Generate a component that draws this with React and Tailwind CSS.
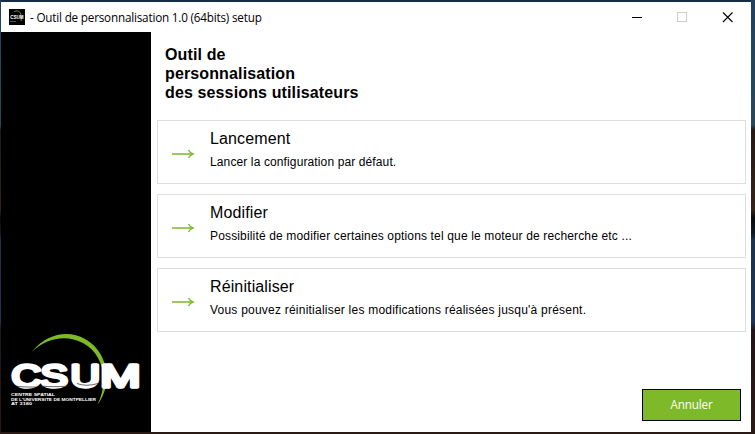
const options = [
  { title: 'Lancement', text: 'Lancer la configuration par défaut.', textCls: 'tracking-[0.12px]' },
  { title: 'Modifier', text: 'Possibilité de modifier certaines options tel que le moteur de recherche etc ...', textCls: 'tracking-[0.155px]' },
  { title: 'Réinitialiser', text: "Vous pouvez réinitialiser les modifications réalisées jusqu'à présent.", textCls: 'tracking-[0.225px]' },
];

function CsumLogo({ className }) {
  return (
    <svg className={className} viewBox="0 0 150 90" fill="none">
      <path d="M32 26.8 C47 8 69 5 85 14 C103 24 109 44 106 61 C104 69 101 75 97 80.5 C101.5 72 103.5 63 103.5 54 C103 38 96 25 83 18 C66 9 46 13 32 26.8Z" fill="#7db928" />
      <g fontFamily="'Liberation Sans', Arial, sans-serif" fill="#fff">
        <text
          transform="translate(0 62) scale(1.3 1)"
          y="0"
          fontSize="31.5"
          stroke="#fff"
          strokeWidth="3.4"
          strokeLinejoin="round"
        >
          <tspan x="8.8">C</tspan>
          <tspan x="31.2">S</tspan>
          <tspan x="54.3">U</tspan>
          <tspan x="77.2" textLength="31" lengthAdjust="spacingAndGlyphs">M</tspan>
        </text>
        <path d="M16 61.2 Q22 62.2 38 62 M43 61.2 Q52 62.2 68 61.2 M77 58.5 Q86 62 98 58.5" stroke="#000" strokeWidth="0.6" />
        <g fontSize="3.8" fontWeight="bold">
          <text x="11" y="71" textLength="44" lengthAdjust="spacingAndGlyphs">CENTRE SPATIAL</text>
          <text x="11" y="75.7" textLength="85" lengthAdjust="spacingAndGlyphs">DE L'UNIVERSITE DE MONTPELLIER</text>
          <text x="11" y="80.3" textLength="21" lengthAdjust="spacingAndGlyphs">AT 3180</text>
        </g>
      </g>
    </svg>
  );
}

function AppIcon() {
  return (
    <svg className="h-4 w-4 bg-black" viewBox="0 0 16 16" fill="none">
      <path d="M5 2.5 Q11 0 12.5 7 L12 12" stroke="#6fa525" strokeWidth="0.9" />
      <text transform="translate(1.2 10.2) scale(0.76 1)" fontSize="6" fontWeight="bold" fontFamily="'Liberation Sans', Arial, sans-serif" fill="#fff">CSUM</text>
      <path d="M1 12.5h6" stroke="#666" strokeWidth="0.8" />
    </svg>
  );
}

export default function App() {
  return (
    <div
      className="h-[434px] w-[755px] overflow-hidden bg-[linear-gradient(180deg,#24405a_0px,#2b4858_125px,#241916_130px,#32231c_210px,#080a0c_218px,#101a24_234px,#1d3349_240px,#1e3450_322px,#20151a_330px,#2a1a16_434px)] pt-0.5 pr-1 pb-0.5 pl-px"
    >
      <div className="flex h-[430px] w-[750px] flex-col bg-white shadow-[0_-2px_0_#172d45]">
        <header className="flex h-[30px] shrink-0 items-center pr-[17px] pl-2">
          <AppIcon />
          <span className="mb-px ml-[5px] font-['Open_Sans',sans-serif] text-[11.7px] leading-4 tracking-[-0.19px] whitespace-pre text-black">
            - Outil de personnalisation 1.0 (64bits) setup
          </span>
          <svg className="ml-auto h-[11px] w-[102px]" viewBox="0 0 102 11" fill="none" shapeRendering="crispEdges">
            <path d="M0 5.5h10" stroke="#000" />
            <rect x="45.5" y="0.5" width="9" height="9" stroke="#ccc" />
            <path d="M91 .5l9.5 9.5M100.5 .5l-9.5 9.5" stroke="#000" shapeRendering="auto" strokeWidth="1.1" />
          </svg>
        </header>
        <div className="flex min-h-0 flex-1">
          <aside className="flex w-[150px] shrink-0 flex-col justify-end bg-black pb-[17px]">
            <CsumLogo className="-ml-px h-[90px] w-[150px]" />
          </aside>
          <main className="flex min-w-0 flex-1 flex-col pr-[5px] pl-[6px] font-['Liberation_Sans',Arial,sans-serif] text-black">
            <h1 className="h-[88px] pt-[13px] pl-2 text-[16px] leading-[19px] font-bold tracking-[0.13px]">
              Outil de
              <br />
              personnalisation
              <br />
              des sessions utilisateurs
            </h1>
            <div className="flex flex-col gap-2.5">
              {options.map((o) => (
                <button key={o.title} className="flex h-16 w-[589px] border border-[#dedede] text-left">
                  <svg className="mt-[28px] ml-[14px] h-[10px] w-[22px]" viewBox="0 0 22 10" fill="none" stroke="#7db928">
                    <path d="M0 5H21" strokeWidth="1.5" />
                    <path d="M16.5 1Q18 4 21 5Q18 6 16.5 9" strokeWidth="1.4" />
                  </svg>
                  <span className="ml-4 flex flex-col">
                    <span className="mt-2 text-[16px] leading-[19px] tracking-[0.12px]">{o.title}</span>
                    <span className={`mt-[7px] text-[12px] leading-[15px] whitespace-nowrap ${o.textCls}`}>{o.text}</span>
                  </span>
                </button>
              ))}
            </div>
            <button className="mt-auto mr-[5px] mb-[11px] flex h-8 w-[99px] items-center justify-center self-end border border-black bg-[#7db928] font-['Open_Sans',sans-serif] text-[11.7px] tracking-[-0.15px] text-white">
              Annuler
            </button>
          </main>
        </div>
      </div>
    </div>
  );
}
